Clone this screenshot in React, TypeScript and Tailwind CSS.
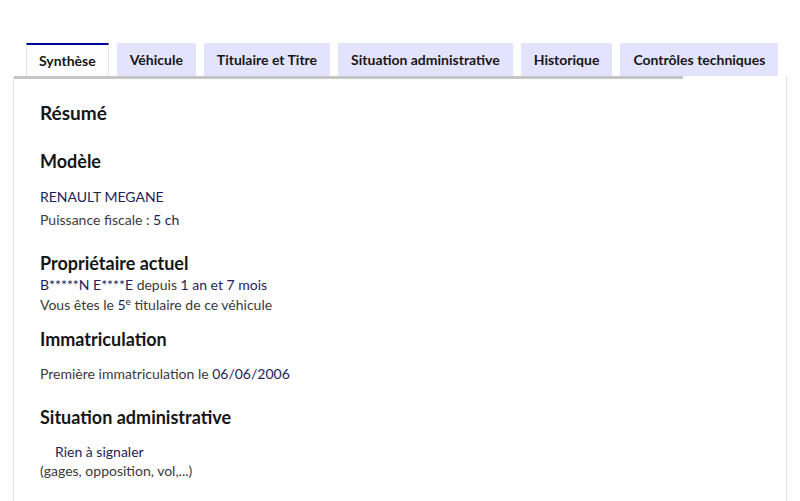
import React from 'react';

const tabs = [
  { label: 'Synthèse', active: true },
  { label: 'Véhicule' },
  { label: 'Titulaire et Titre' },
  { label: 'Situation administrative' },
  { label: 'Historique' },
  { label: 'Contrôles techniques' },
];

const font = { fontFamily: 'Lato, "Noto Sans", sans-serif' };

export default function App() {
  return (
    <div className="w-[800px] h-[501px] overflow-hidden bg-white pt-[43px] pl-[13px]" style={font}>
      <div className="flex gap-2 pl-[13px]">
        {tabs.map((t) =>
          t.active ? (
            <div
              key={t.label}
              className="h-[33px] px-[12px] flex items-center bg-white border-t-2 border-[#000091] border-x border-x-[#e5e5e5] text-[14px] font-bold text-[#161616]"
            >
              {t.label}
            </div>
          ) : (
            <div
              key={t.label}
              className="h-[33px] px-[13px] flex items-center bg-[#e3e3fd] text-[14px] font-bold text-[#161616]"
            >
              {t.label}
            </div>
          )
        )}
      </div>
      <div className="w-[774px] h-[430px] border-x border-[#e5e5e5]">
        <div className="w-[669px] h-[3px] bg-[#c6c6c6]" />
        <div className="pl-[26px] pt-[22px] text-[14px] text-[#3a3a3a]">
          <h2 className="text-[19px] font-bold text-[#161616] leading-[24px]">Résumé</h2>
          <h3 className="mt-[24px] text-[18px] font-bold text-[#161616] leading-[24px]">Modèle</h3>
          <p className="mt-[13px] leading-[22px] text-[#1e1e5a]">RENAULT MEGANE</p>
          <p className="mt-[1px] leading-[22px]">
            Puissance fiscale : <span className="text-[#1e1e5a]">5 ch</span>
          </p>
          <h3 className="mt-[20px] text-[18px] font-bold text-[#161616] leading-[24px]">Propriétaire actuel</h3>
          <p className="leading-[20px] text-[#1e1e5a]">
            B*****N E****E <span className="text-[#3a3a3a]">depuis</span> 1 an et 7 mois
          </p>
          <p className="leading-[20px]">
            Vous êtes le <span className="text-[#1e1e5a]">5<sup className="text-[10px]">e</sup></span> titulaire de ce véhicule
          </p>
          <h3 className="mt-[12px] text-[18px] font-bold text-[#161616] leading-[24px]">Immatriculation</h3>
          <p className="mt-[12px] leading-[22px]">
            Première immatriculation le <span className="text-[#1e1e5a]">06/06/2006</span>
          </p>
          <h3 className="mt-[20px] text-[18px] font-bold text-[#161616] leading-[24px]">Situation administrative</h3>
          <p className="mt-[13px] pl-[15px] leading-[19px] text-[#1e1e5a]">Rien à signaler</p>
          <p className="leading-[19px]">(gages, opposition, vol,...)</p>
        </div>
      </div>
    </div>
  );
}
